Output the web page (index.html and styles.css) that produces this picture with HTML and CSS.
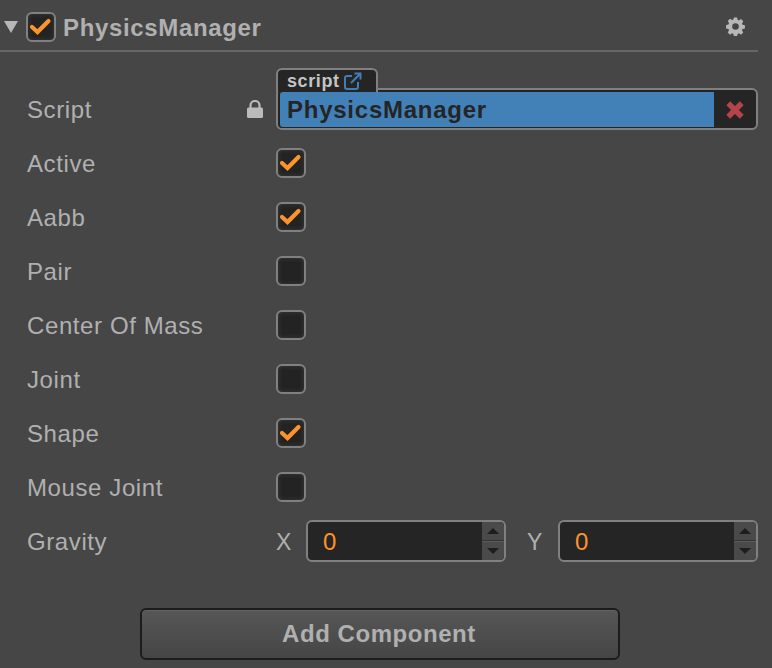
FILE: index.html
```html
<!DOCTYPE html>
<html lang="en">
<head>
<meta charset="utf-8">
<title>PhysicsManager</title>
<link rel="stylesheet" href="styles.css">
</head>
<body>
<div class="panel">
  <header class="head">
    <span class="fold"></span>
    <span class="check"><svg class="tick" viewBox="0 0 26 26"><path d="M4 13l5.500 5L20.500 7"/></svg></span>
    <span class="title">PhysicsManager</span>
    <svg class="gear" viewBox="0 0 20 20"><path fill-rule="evenodd" d="M8.300 0.500h3.400l.5 2.500 1.400.6 2.200-1.400 2.400 2.400-1.400 2.200.6 1.400 2.500.5v3.400l-2.500.5-.6 1.400 1.400 2.200-2.400 2.400-2.200-1.400-1.400.6-.5 2.500H8.300l-.5-2.500-1.400-.6-2.200 1.400-2.400-2.400 1.400-2.200-.6-1.400-2.500-.5V8.300l2.500-.5.6-1.400-1.400-2.200 2.400-2.400 2.200 1.400 1.400-.6zM10 6.500a3.500 3.500 0 1 0 0 7 3.500 3.500 0 0 0 0-7z"/></svg>
  </header>
  <div class="props">
    <div class="row">
      <span class="label">Script</span>
      <svg class="lock" viewBox="0 0 16 18"><path d="M3.500 8V5.500a4.500 4.500 0 0 1 9 0V8" fill="none" stroke="#bbb" stroke-width="2.200"/><rect x="0" y="7.500" width="16" height="10.500" rx="1.500"/></svg>
      <div class="field">
        <div class="tab"><span class="tab-text">script</span><svg class="link" viewBox="0 0 18 18"><path d="M14 10v5a2 2 0 0 1-2 2H3a2 2 0 0 1-2-2V6a2 2 0 0 1 2-2h5" /><path d="M7 11L16 2M10.500 1.500h6v6"/></svg></div>
        <div class="name">PhysicsManager</div>
        <div class="clear"><svg class="cross" viewBox="0 0 16 16"><path d="M2 2l12 12M14 2L2 14"/></svg></div>
      </div>
    </div>
    <div class="row"><span class="label">Active</span><span class="check"><svg class="tick" viewBox="0 0 26 26"><path d="M4 13l5.500 5L20.500 7"/></svg></span></div>
    <div class="row"><span class="label">Aabb</span><span class="check"><svg class="tick" viewBox="0 0 26 26"><path d="M4 13l5.500 5L20.500 7"/></svg></span></div>
    <div class="row"><span class="label">Pair</span><span class="check"></span></div>
    <div class="row"><span class="label">Center Of Mass</span><span class="check"></span></div>
    <div class="row"><span class="label">Joint</span><span class="check"></span></div>
    <div class="row"><span class="label">Shape</span><span class="check"><svg class="tick" viewBox="0 0 26 26"><path d="M4 13l5.500 5L20.500 7"/></svg></span></div>
    <div class="row"><span class="label">Mouse Joint</span><span class="check"></span></div>
    <div class="row">
      <span class="label">Gravity</span>
      <div class="vec">
        <span class="axis">X</span>
        <div class="num"><span class="val">0</span><div class="spin"><span class="up"><i class="tri-up"></i></span><span class="down"><i class="tri-down"></i></span></div></div>
        <span class="axis axis-y">Y</span>
        <div class="num"><span class="val">0</span><div class="spin"><span class="up"><i class="tri-up"></i></span><span class="down"><i class="tri-down"></i></span></div></div>
      </div>
    </div>
  </div>
  <div class="foot"><button class="add">Add Component</button></div>
</div>
</body>
</html>
```
FILE: styles.css
```css
html, body { margin: 0; padding: 0; }
body {
  width: 772px; height: 668px; overflow: hidden;
  background: #464646; color: #b0b0b0;
  font-family: "Liberation Sans", Arial, sans-serif; font-size: 24px;
}
.panel { width: 758px; }
.head {
  display: flex; align-items: center; padding-left: 4px; padding-top: 4px;
  box-sizing: border-box; height: 52px;
  border-bottom: 2px solid #666;
}
.fold {
  width: 0; height: 0; margin-right: 8px;
  border-left: 7px solid transparent; border-right: 7px solid transparent; border-top: 12px solid #b7b7b7;
}
.check {
  box-sizing: border-box; width: 30px; height: 30px; flex: none;
  border: 2px solid #808080; border-radius: 6px;
  background: #232323; box-shadow: inset 0 0 5px rgba(70,70,70,.7);
  display: flex;
}
.row > .check { margin-top: -2px; }
.tick { width: 26px; height: 26px; fill: none; stroke: #fd942b; stroke-width: 4.200; stroke-linecap: round; }
.title { margin: 2px 0 0 7px; font-weight: 700; letter-spacing: .65px; }
.gear { width: 19px; height: 19px; margin: -2px 13px 0 auto; fill: #b7b7b7; }
.props { padding-top: 31px; }
.row { height: 54px; display: flex; align-items: center; padding-left: 27px; position: relative; }
.label { width: 249px; flex: none; letter-spacing: .6px; }
.lock { position: absolute; left: 247px; top: 17px; width: 16px; height: 18px; fill: #bbb; }
.field {
  position: relative; box-sizing: border-box; width: 482px; height: 42px; margin-top: -2px;
  border: 2px solid #808080; border-radius: 6px; background: #252525;
  padding: 2px 0 1px 2px; display: flex;
}
.tab {
  position: absolute; left: -2px; top: -22px; box-sizing: border-box; width: 102px; height: 24px;
  background: #252525; border: 2px solid #808080; border-bottom: 0; border-radius: 6px 6px 0 0;
  display: flex; align-items: center; padding-left: 9px;
}
.tab-text { font-size: 18px; font-weight: 700; letter-spacing: .6px; color: #c4c4c4; }
.link { width: 18px; height: 18px; margin-left: 4px; fill: none; stroke: #3f7fb8; stroke-width: 2; }
.name {
  width: 434px; flex: none; background: #4281b8; color: #252525; font-weight: 700;
  line-height: 35px; padding-left: 7px; box-sizing: border-box; letter-spacing: .75px;
  border-radius: 3px 0 0 3px;
}
.clear { flex: 1; display: flex; align-items: center; justify-content: center; }
.cross { width: 18px; height: 18px; fill: none; stroke: #b5434a; stroke-width: 4.800; }
.vec { display: flex; align-items: center; margin-top: -2px; }
.axis { width: 30px; flex: none; margin-top: 2px; font-size: 23px; }
.axis-y { margin-left: 21px; width: 31px; }
.num {
  box-sizing: border-box; width: 200px; height: 42px; display: flex;
  border: 2px solid #808080; border-radius: 6px; background: #252525;
}
.val { flex: 1; padding-left: 15px; line-height: 40px; color: #fd942b; }
.spin { width: 22px; display: flex; flex-direction: column; background: #4a4a4a; border-radius: 0 4px 4px 0; }
.up, .down { flex: 1; display: flex; align-items: center; justify-content: center; }
.up { border-bottom: 1px solid #333; }
.down { border-top: 1px solid #5c5c5c; }
.tri-up { width: 0; height: 0; border-left: 6px solid transparent; border-right: 6px solid transparent; border-bottom: 6px solid #1d1d1d; }
.tri-down { width: 0; height: 0; border-left: 6px solid transparent; border-right: 6px solid transparent; border-top: 6px solid #1d1d1d; }
.foot { display: flex; padding: 39px 0 0 140px; }
.add {
  box-sizing: border-box; width: 480px; height: 52px; padding: 0 2px 0 0;
  border: 2px solid #1c1c1c; border-radius: 6px;
  background: linear-gradient(#575757, #454545);
  box-shadow: inset 0 1px 0 #636363;
  color: #b0b0b0; font: 700 24px "Liberation Sans", Arial, sans-serif; letter-spacing: .55px;
}
```
